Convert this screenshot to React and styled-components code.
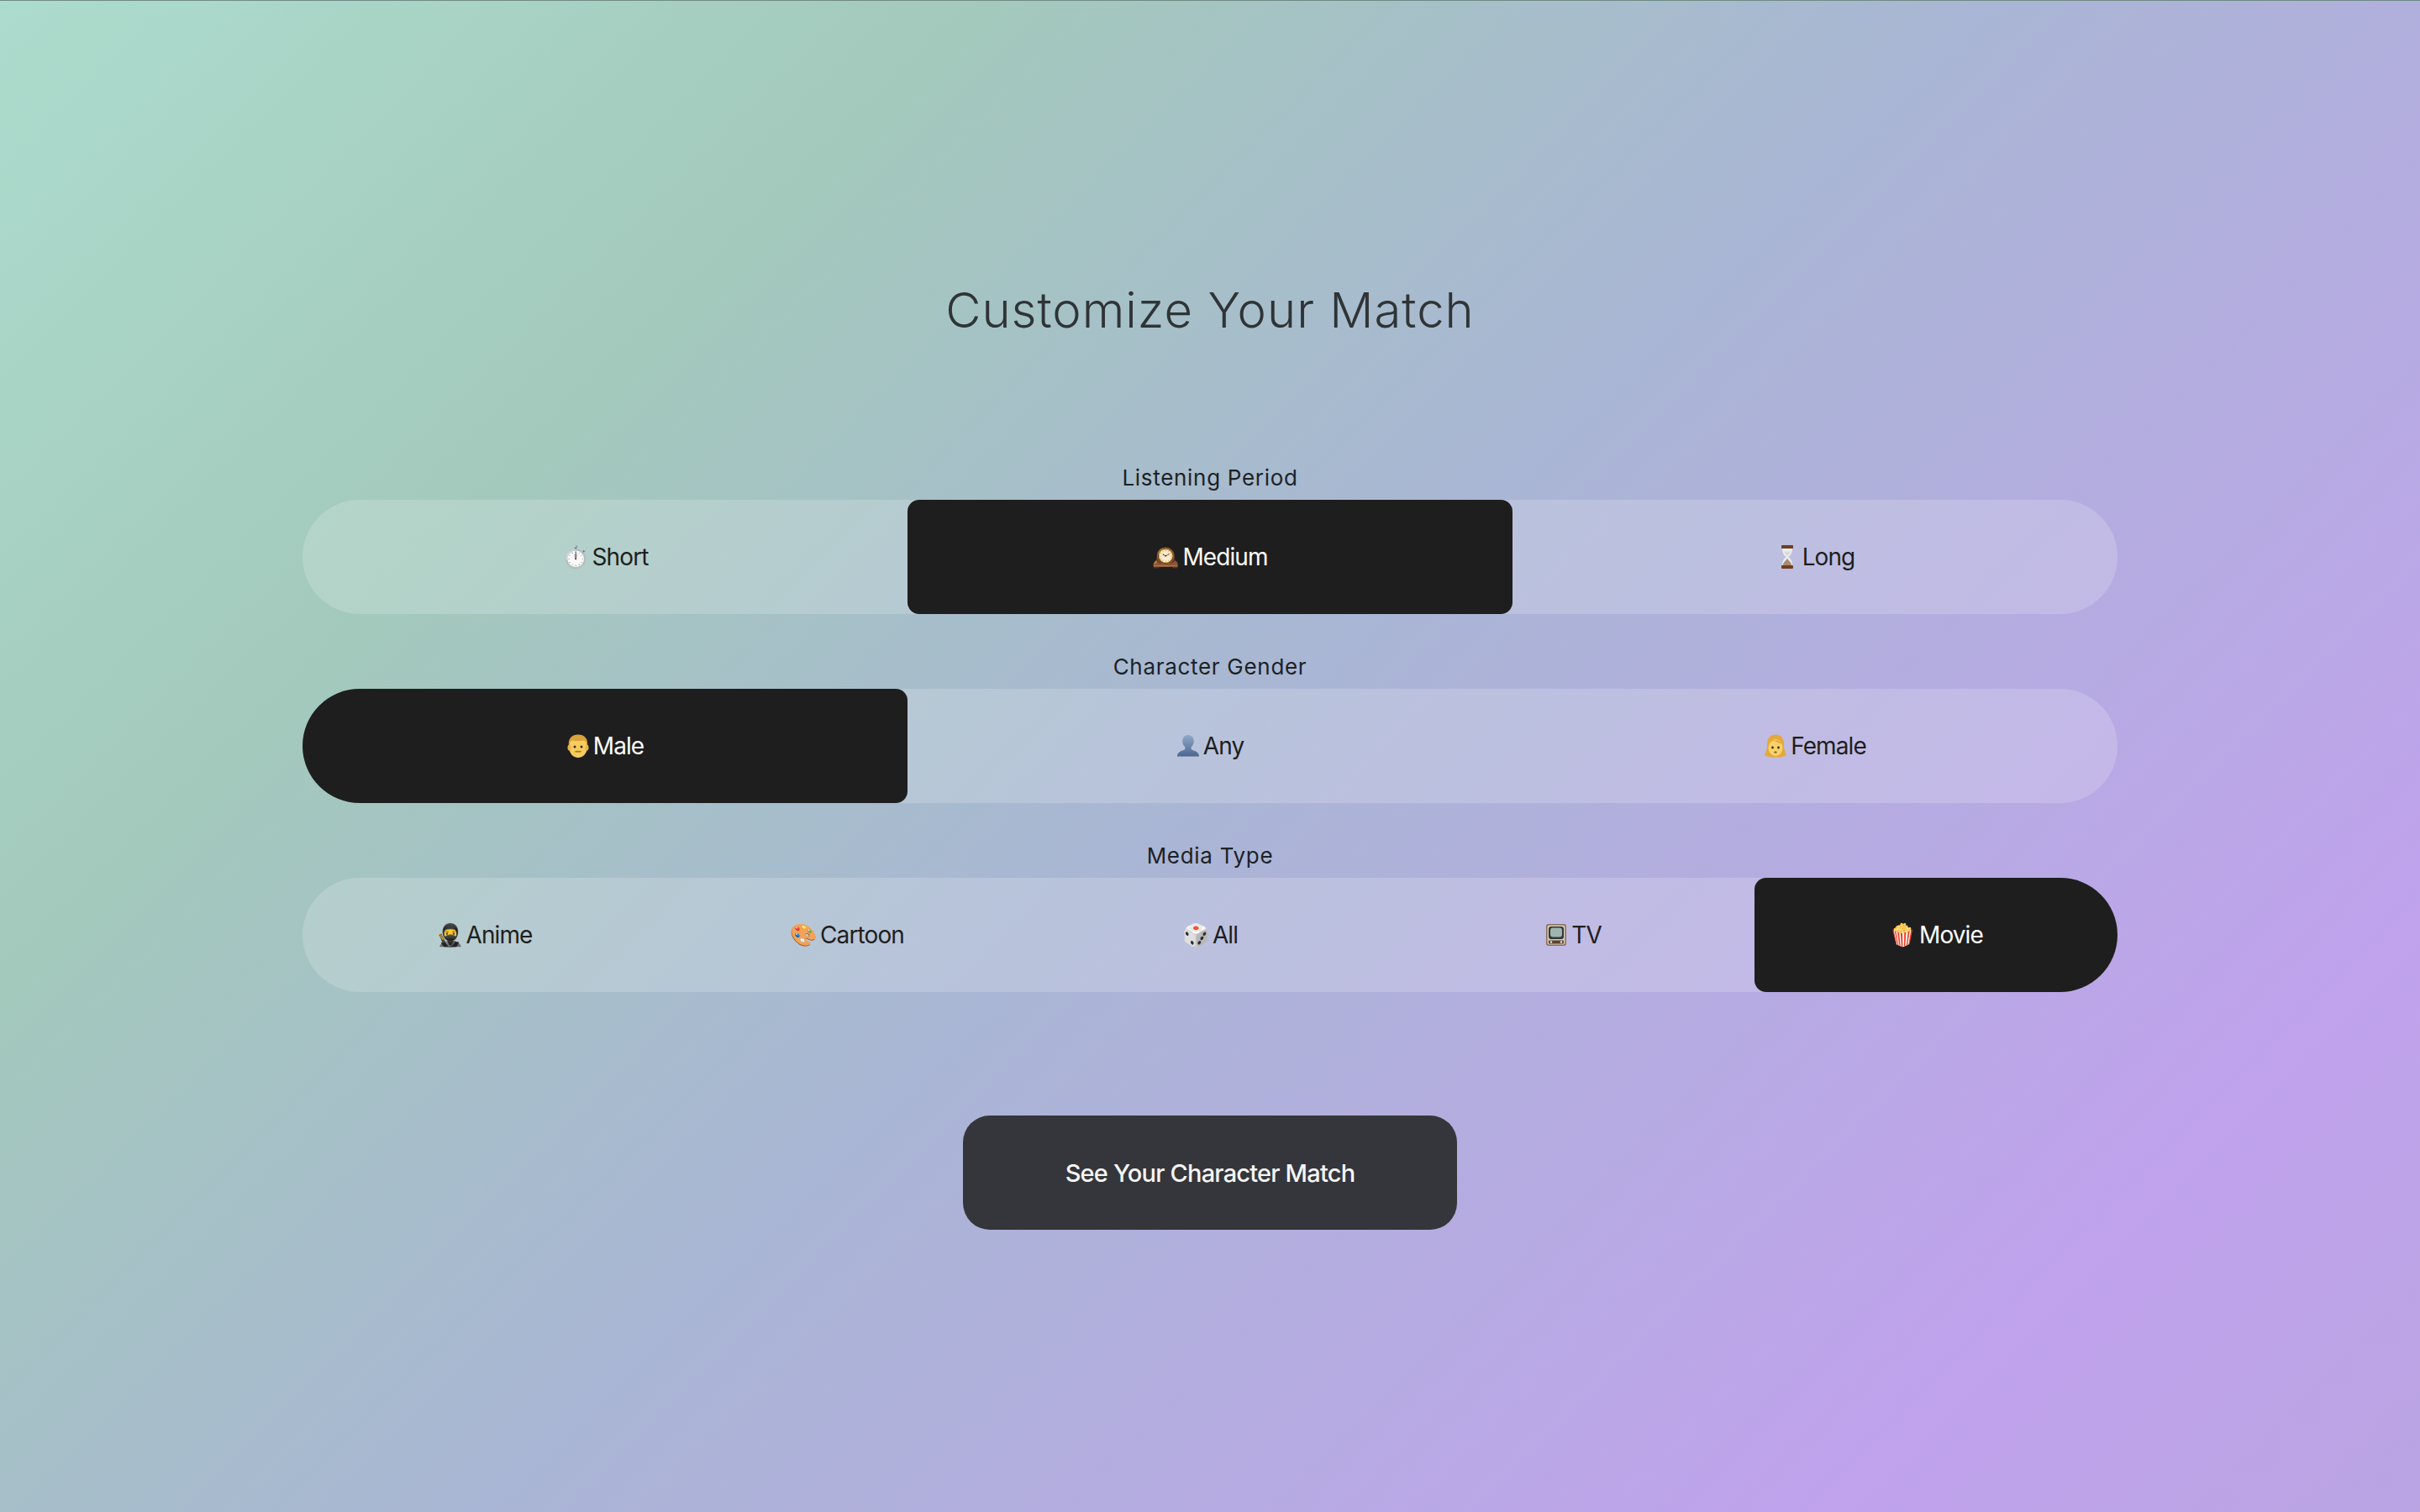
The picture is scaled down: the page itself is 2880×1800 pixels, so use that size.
import React, { useState } from "react";
import styled, { createGlobalStyle } from "styled-components";

const GlobalStyle = createGlobalStyle`
  html, body {
    margin: 0;
    padding: 0;
  }
  body {
    font-family: "Inter", "Liberation Sans", sans-serif;
  }
`;

const Page = styled.div`
  box-sizing: border-box;
  width: 2880px;
  height: 1800px;
  padding-top: 330px;
  display: flex;
  flex-direction: column;
  align-items: center;
  border-top: 1px solid #6f8a84;
  background: linear-gradient(
    135deg,
    #acdccd 0%,
    #a3c9bc 25%,
    #a9b6d4 50%,
    #c0a2ed 85%,
    #baa4e2 100%
  );
`;

const Title = styled.h1`
  margin: 0 0 136px;
  font-family: "Inter", sans-serif;
  font-size: 58px;
  line-height: 76px;
  font-weight: 300;
  letter-spacing: 1px;
  color: #2f3436;
`;

const Groups = styled.div`
  width: 2160px;
  display: flex;
  flex-direction: column;
  gap: 37px;
`;

const Group = styled.div`
  display: flex;
  flex-direction: column;
  align-items: center;
`;

const Label = styled.div`
  height: 52px;
  line-height: 52px;
  font-size: 26px;
  letter-spacing: 0.7px;
  color: #1c2226;
`;

const Track = styled.div`
  width: 100%;
  height: 136px;
  display: flex;
  border-radius: 68px;
  background: rgba(255, 255, 255, 0.18);
`;

const Option = styled.button`
  flex: 1;
  display: flex;
  align-items: center;
  justify-content: center;
  gap: 4px;
  border: 0;
  padding: 0;
  font-family: "Inter", sans-serif;
  font-size: 28px;
  letter-spacing: -0.9px;
  cursor: pointer;
  color: ${(p) => (p.$active ? "#ffffff" : "#1e1e1e")};
  background: ${(p) => (p.$active ? "#1e1e1e" : "transparent")};
  border-radius: ${(p) => (p.$active ? "14px" : "0")};
  &:first-child {
    border-radius: ${(p) => (p.$active ? "68px 14px 14px 68px" : "68px 0 0 68px")};
  }
  &:last-child {
    border-radius: ${(p) => (p.$active ? "14px 68px 68px 14px" : "0 68px 68px 0")};
  }
`;

const Emoji = styled.span`
  font-size: 26px;
  line-height: 30px;
  letter-spacing: 0;
`;

const DrawnEmoji = styled.svg`
  display: block;
  width: 28px;
  height: 30px;
`;

const MatchButton = styled.button`
  margin-top: 147px;
  width: 588px;
  height: 136px;
  border: 0;
  border-radius: 32px;
  background: #35363b;
  color: #f5f5f5;
  font-family: "Inter", sans-serif;
  font-size: 29px;
  font-weight: 500;
  letter-spacing: -0.8px;
  cursor: pointer;
`;

// bust in silhouette, muted slate like the reference
const BustIcon = () => (
  <DrawnEmoji viewBox="0 0 28 30">
    <defs>
      <linearGradient id="bust" x1="0" y1="0" x2="0" y2="1">
        <stop offset="0" stopColor="#8fa9c9" />
        <stop offset="1" stopColor="#4c6690" />
      </linearGradient>
    </defs>
    <path
      fill="url(#bust)"
      d="M14 2c4.2 0 6.8 3.2 6.8 7.2 0 3-1.3 5.6-3.2 7.1v1.6c0 1 .7 1.6 2 2.1 3.4 1.2 6.6 2.4 7.4 6.6.1.6-.2 1-.8 1H1.800c-.6 0-.9-.4-.8-1 .8-4.2 4-5.400 7.400-6.600 1.300-.5 2-1.100 2-2.100v-1.600c-1.900-1.500-3.200-4.100-3.200-7.100C7.200 5.200 9.800 2 14 2z"
    />
  </DrawnEmoji>
);

// hourglass with brown caps and sand
const HourglassIcon = () => (
  <DrawnEmoji viewBox="0 0 28 30">
    <path fill="#e9eef0" d="M8 4h12c0 5-1 8-4.500 11C19 18 20 21 20 26H8c0-5 1-8 4.500-11C9 12 8 9 8 4z" />
    <path fill="#a98a72" d="M14 16.500c.8 3 4.800 4 5.500 9.500h-11c.7-5.500 4.700-6.500 5.500-9.500z" />
    <path fill="#c8b09a" d="M10.500 8.500h7c-.8 2.600-2.200 4.500-3.500 6-1.300-1.500-2.700-3.400-3.500-6z" opacity="0.35" />
    <rect x="7" y="1" width="14" height="4" rx="1" fill="#6f3d22" />
    <rect x="7" y="25" width="14" height="4" rx="1" fill="#6f3d22" />
  </DrawnEmoji>
);

// old wooden television
const TelevisionIcon = () => (
  <DrawnEmoji viewBox="0 0 28 30">
    <rect x="2" y="2" width="24" height="26" rx="3" fill="#8a6f5c" />
    <rect x="3.500" y="3.500" width="21" height="23" rx="2" fill="#d9c9b4" />
    <rect x="5" y="5" width="18" height="15" rx="3" fill="#2e3a3a" />
    <rect x="7" y="6.500" width="14" height="11" rx="3" fill="#9fb4ae" />
    <rect x="5" y="21.500" width="18" height="4" rx="1" fill="#5a4334" />
    <circle cx="8" cy="23.500" r="1.200" fill="#efe6d6" />
    <circle cx="20" cy="23.500" r="1.200" fill="#efe6d6" />
  </DrawnEmoji>
);

// yellow man with short blond hair
const ManIcon = () => (
  <DrawnEmoji viewBox="0 0 28 30">
    <ellipse cx="14" cy="16" rx="11" ry="13" fill="#f7cc5c" />
    <ellipse cx="3.500" cy="17" rx="2" ry="3.500" fill="#eab549" />
    <ellipse cx="24.500" cy="17" rx="2" ry="3.500" fill="#eab549" />
    <path fill="#d9a23a" d="M2.800 14C2 6 7 1.500 14 1.500S26 6 25.200 14c-.8-3-2.400-5-4.700-5.500-3.800.8-9 .8-13 0C5.200 9 3.600 11 2.800 14z" />
    <circle cx="10" cy="16" r="1.500" fill="#3a2a1a" />
    <circle cx="18" cy="16" r="1.500" fill="#3a2a1a" />
    <path fill="#a8742c" d="M9.500 22c2-1.500 3.500-1.500 4.500-.8 1-.7 2.500-.7 4.500.8-3 .9-6 .9-9 0z" />
  </DrawnEmoji>
);

// yellow woman with long blond hair
const WomanIcon = () => (
  <DrawnEmoji viewBox="0 0 28 30">
    <path fill="#e3a93c" d="M14 1.500C6.500 1.500 4 7 4 13c0 5-1 9-3 13 3 2 7 2.500 13 2.500s10-.5 13-2.500c-2-4-3-8-3-13 0-6-2.500-11.500-10-11.500z" />
    <ellipse cx="14" cy="17" rx="8.500" ry="10" fill="#f9d36a" />
    <path fill="#e3a93c" d="M5.500 15c1-4 3-6 6-7.500 2 2.500 6.500 4.500 11 5.500.3.700.2 1.500 0 2C21 7 10 5 5.500 15z" />
    <circle cx="10.500" cy="17" r="1.400" fill="#3a2a1a" />
    <circle cx="17.500" cy="17" r="1.400" fill="#3a2a1a" />
    <ellipse cx="14" cy="22.500" rx="1.800" ry="1" fill="#8a4b2a" />
  </DrawnEmoji>
);

const groups = [
  {
    label: "Listening Period",
    initial: 1,
    options: [
      { icon: "⏱️", text: "Short" },
      { icon: "🕰️", text: "Medium" },
      { icon: <HourglassIcon />, text: "Long" },
    ],
  },
  {
    label: "Character Gender",
    initial: 0,
    options: [
      { icon: <ManIcon />, text: "Male" },
      { icon: <BustIcon />, text: "Any" },
      { icon: <WomanIcon />, text: "Female" },
    ],
  },
  {
    label: "Media Type",
    initial: 4,
    options: [
      { icon: "🥷", text: "Anime" },
      { icon: "🎨", text: "Cartoon" },
      { icon: "🎲", text: "All" },
      { icon: <TelevisionIcon />, text: "TV" },
      { icon: "🍿", text: "Movie" },
    ],
  },
];

const ChoiceGroup = ({ label, options, initial }) => {
  const [selected, setSelected] = useState(initial);
  return (
    <Group>
      <Label>{label}</Label>
      <Track>
        {options.map((o, i) => (
          <Option key={o.text} $active={i === selected} onClick={() => setSelected(i)}>
            <Emoji>{o.icon}</Emoji>
            {o.text}
          </Option>
        ))}
      </Track>
    </Group>
  );
};

const App = () => (
  <Page>
    <GlobalStyle />
    <Title>Customize Your Match</Title>
    <Groups>
      {groups.map((g) => (
        <ChoiceGroup key={g.label} {...g} />
      ))}
    </Groups>
    <MatchButton>See Your Character Match</MatchButton>
  </Page>
);

export default App;
